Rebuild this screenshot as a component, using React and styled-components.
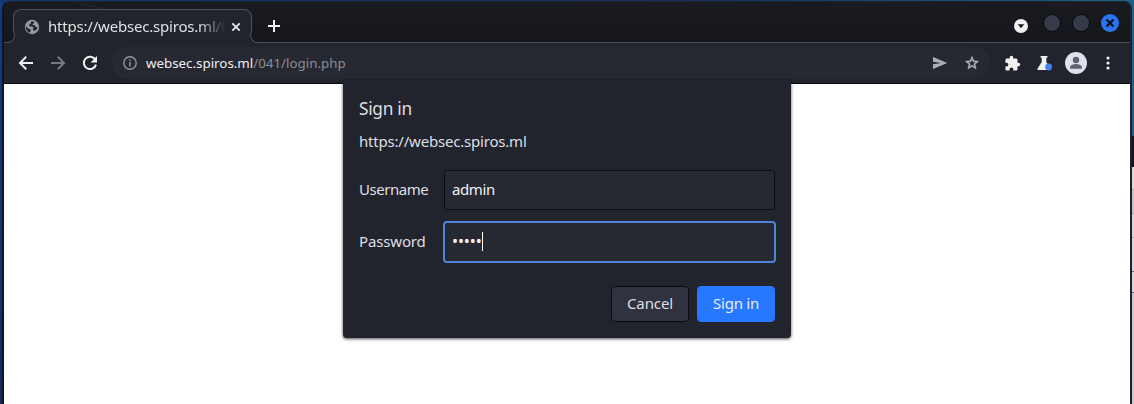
import React from "react";
import styled, { createGlobalStyle } from "styled-components";

const Global = createGlobalStyle`
  * { box-sizing: border-box; }
  body { margin: 0; overflow: hidden; background: #17325f; font-family: "Noto Sans", sans-serif; }
`;

const Desktop = styled.div`
  display: flex;
  width: 1134px;
  height: 404px;
  overflow: hidden;
  background: linear-gradient(90deg, #12366f 0, #122f5c 60%, #1b6287 100%);
`;

const LeftEdge = styled.div`
  width: 2px;
  background: linear-gradient(#0f3c7c, #14387a 40%, #122c5c);
`;

const RightEdge = styled.div`
  display: flex;
  flex-direction: column;
  width: 2px;
`;

const Slice = styled.div`
  height: ${(p) => p.$h}px;
  background: ${(p) => p.$color};
`;

const Window = styled.main`
  display: flex;
  flex-direction: column;
  width: 1130px;
  margin-top: 1px;
  border: solid #20222b;
  border-width: 1px 2px 0;
  border-left-color: #10141f;
  border-radius: 8px 8px 0 0;
  background: #22242d;
  position: relative;
`;

const TabStrip = styled.header`
  display: flex;
  flex: none;
  height: 41px;
  padding: 7px 9px 0 9px;
  border-bottom: 1px solid #4d4f54;
  border-radius: 6px 6px 0 0;
  background:
    linear-gradient(14deg, transparent 45%, #25262b 47%, transparent 51%) 40px 0 / 100px 8px no-repeat,
    linear-gradient(#1a1b21, #16171c);
`;

const Tab = styled.div`
  position: relative;
  display: flex;
  align-items: center;
  width: 239px;
  height: 34px;
  padding: 0 10px 0 10px;
  border: 1px solid #4d4f54;
  border-bottom: 0;
  border-radius: 8px 8px 0 0;
  background: #22242d;
  &::before,
  &::after {
    content: "";
    position: absolute;
    bottom: 0;
    width: 9px;
    height: 9px;
    border-bottom: 1px solid #4d4f54;
  }
  &::before {
    left: -9px;
    border-right: 1px solid #4d4f54;
    border-bottom-right-radius: 8px;
    background: #17181d;
    box-shadow: 4px 4px 0 1px #22242d;
    clip-path: inset(0);
  }
  &::after {
    right: -9px;
    border-left: 1px solid #4d4f54;
    border-bottom-left-radius: 8px;
    background: #17181d;
    box-shadow: -4px 4px 0 1px #22242d;
    clip-path: inset(0);
  }
`;

const TabTitle = styled.span`
  flex: none;
  width: 183px;
  margin-left: 8px;
  padding-bottom: 2px;
  color: #dfe0e2;
  font-size: 15px;
  line-height: 22px;
  letter-spacing: -0.2px;
  white-space: nowrap;
  mask-image: linear-gradient(90deg, #000 150px, transparent 178px);
`;

const CloseIcon = styled.svg`
  flex: none;
`;

const NewTab = styled.svg`
  margin: 10px 0 0 15px;
`;

const WindowControls = styled.div`
  display: flex;
  align-items: center;
  height: 28px;
  margin-left: auto;
`;

const TabSearch = styled.svg`
  margin: 6px 15px 0 0;
`;

const Orb = styled.span`
  display: flex;
  align-items: center;
  justify-content: center;
  width: 18px;
  height: 18px;
  margin-right: 11px;
  border: 1px solid #090a0e;
  border-radius: 50%;
  background: #353b48;
`;

const CloseOrb = styled(Orb)`
  margin-right: 2px;
  border: 0;
  background: #2b74f0;
`;

const Toolbar = styled.nav`
  display: flex;
  flex: none;
  align-items: center;
  height: 41px;
  padding: 0 20px 0 14px;
  border-bottom: 1px solid #08090d;
  background: #22242d;
`;

const NavIcons = styled.div`
  display: flex;
  align-items: center;
  gap: 16px;
  margin-right: 14px;
`;

const AddressBar = styled.div`
  display: flex;
  align-items: center;
  width: 878px;
  height: 32px;
  padding: 0 10px 0 11px;
  border-radius: 16px;
  background: #262832;
`;

const Address = styled.span`
  margin-left: 9px;
  color: #8c8e94;
  font-size: 13.33px;
  line-height: 20px;
  white-space: nowrap;
  b { color: #f0f0f1; font-weight: 400; }
`;

const AddressActions = styled.div`
  display: flex;
  align-items: center;
  gap: 16px;
  margin-left: auto;
`;

const ToolbarActions = styled.div`
  display: flex;
  align-items: center;
  margin-left: auto;
`;

const Icon = styled.svg`
  display: block;
  flex: none;
  margin-left: ${(p) => p.$ml || 0}px;
`;

const Page = styled.section`
  flex: 1;
  width: 1126px;
  background: #fff;
`;

const Dialog = styled.form`
  position: absolute;
  top: 78px;
  left: 339px;
  width: 448px;
  height: 258px;
  padding: 17px 16px 16px;
  border-radius: 4px;
  background: #22242d;
  box-shadow: 0 1px 3px 1px rgba(0, 0, 0, 0.28), 0 1px 2px rgba(0, 0, 0, 0.35);
  color: #dedfe2;
  font-size: 15px;
`;

const Title = styled.h1`
  margin: 0;
  font-size: 17.3px;
  font-weight: 400;
  line-height: 24px;
  letter-spacing: -0.3px;
`;

const Origin = styled.p`
  margin: 9px 0 18px;
  line-height: 22px;
  letter-spacing: -0.2px;
`;

const Field = styled.label`
  display: flex;
  align-items: center;
  height: 40px;
  margin-bottom: 12px;
`;

const FieldName = styled.span`
  width: 85px;
  padding-bottom: 2px;
  letter-spacing: ${(p) => p.$tracking}px;
`;

const Input = styled.span`
  display: flex;
  align-items: center;
  width: 331px;
  height: 40px;
  padding: 0 0 2px 7px;
  border: 1px solid #0d0e13;
  border-radius: 3px;
  background: #262832;
  color: #f2f2f3;
  letter-spacing: -0.4px;
  ${(p) => p.$focused && `
    border-color: #4d82d7;
    box-shadow: 0 0 0 1px #5187dd;
    font-size: 16px;
    letter-spacing: -0.1px;
  `}
`;

const Caret = styled.i`
  width: 1px;
  height: 19px;
  background: #fff;
`;

const Buttons = styled.div`
  display: flex;
  justify-content: flex-end;
  gap: 8px;
  margin-top: 24px;
`;

const Button = styled.button`
  width: 78px;
  height: 36px;
  padding: 0 0 2px;
  border: 1px solid ${(p) => (p.$primary ? "#2777ff" : "#0c0d12")};
  border-radius: 4px;
  background: ${(p) => (p.$primary ? "#2777ff" : "#30333f")};
  color: ${(p) => (p.$primary ? "#e5eeff" : "#dedfe2")};
  font: 15px "Noto Sans", sans-serif;
  letter-spacing: ${(p) => (p.$primary ? -0.25 : -0.1)}px;
`;

const slices = [
  [136, "#1b6287"],
  [31, "#12151d"],
  [22, "#d9d9dc"],
  [1, "#a8a8ad"],
  [23, "#c4c4c8"],
  [1, "#a8a8ad"],
  [23, "#d5d5d9"],
  [1, "#a8a8ad"],
  [33, "#d5d5d9"],
  [1, "#62636a"],
  [20, "#d5d5d9"],
  [1, "#62636a"],
  [111, "#c9c9ce"],
];

export default function App() {
  return (
    <Desktop>
      <Global />
      <LeftEdge />
      <Window>
        <TabStrip>
          <Tab>
            <Icon width="16" height="16" viewBox="0 0 16 16">
              <circle cx="8" cy="8" r="7.2" fill="#96989b" />
              <path d="M8.5 2.2C7 2.5 6.4 3.5 6.8 4.7L5 5.8l.3 1.5 3 .1 1.3 1.4-.7 1.6.8 1.4c2-.3 3.4-1.6 4-3.3l-2.3-.7-.8-1.6-2.2-.3 1.1-1.6 1.3-.6Z M1.6 7.2l3 2.5 1.8.5.2 1.5-.8 2C3.4 12.8 1.7 10.7 1.6 7.2Z" fill="#22242d" />
            </Icon>
            <TabTitle>https://websec.spiros.ml/0</TabTitle>
            <CloseIcon width="10" height="10" viewBox="0 0 10 10">
              <path d="M1.3 1.3l7.4 7.4M8.7 1.3L1.3 8.7" stroke="#e8e8e9" strokeWidth="1.8" />
            </CloseIcon>
          </Tab>
          <NewTab width="14" height="14" viewBox="0 0 14 14">
            <path d="M7 1v12M1 7h12" stroke="#f2f2f2" strokeWidth="2" />
          </NewTab>
          <WindowControls>
            <TabSearch width="14" height="14" viewBox="0 0 14 14">
              <circle cx="7" cy="7" r="7" fill="#f0f0ef" />
              <path d="M3.8 5.2h6.4L7 9.3Z" fill="#17181d" />
            </TabSearch>
            <Orb />
            <Orb />
            <CloseOrb>
              <svg width="10" height="10" viewBox="0 0 10 10">
                <path d="M1.5 1.5l7 7M8.5 1.5l-7 7" stroke="#0b1122" strokeWidth="2.3" />
              </svg>
            </CloseOrb>
          </WindowControls>
        </TabStrip>
        <Toolbar>
          <NavIcons>
            <Icon width="16" height="16" viewBox="0 0 16 16">
              <path d="M15 8H2.5M8.2 1.8L2 8l6.2 6.2" fill="none" stroke="#f1f1f2" strokeWidth="2" />
            </Icon>
            <Icon width="16" height="16" viewBox="0 0 16 16">
              <path d="M1 8h12.5M7.8 1.8L14 8l-6.2 6.2" fill="none" stroke="#777980" strokeWidth="2" />
            </Icon>
            <Icon width="16" height="16" viewBox="0 0 16 16">
              <path d="M13.3 4.6A6.2 6.2 0 1 0 14 9.6" fill="none" stroke="#f1f1f2" strokeWidth="2" />
              <path d="M15 1v6.5H8.6Z" fill="#f1f1f2" />
            </Icon>
          </NavIcons>
          <AddressBar>
            <Icon width="14" height="14" viewBox="0 0 14 14">
              <circle cx="7" cy="7" r="6.2" fill="none" stroke="#94969b" strokeWidth="1.4" />
              <path d="M7 6v4.4M7 3.4v1.5" stroke="#94969b" strokeWidth="1.5" />
            </Icon>
            <Address><b>websec.spiros.ml</b>/041/login.php</Address>
            <AddressActions>
              <Icon width="16" height="16" viewBox="0 0 16 16">
                <path d="M1 2l14.3 6L1 14V9.3L9 8 1 6.7Z" fill="#aeb0b2" />
              </Icon>
              <Icon width="16" height="16" viewBox="0 0 24 24">
                <path d="M22 9.24l-7.19-.62L12 2 9.19 8.63 2 9.24l5.46 4.73L5.82 21 12 17.27 18.18 21l-1.63-7.03L22 9.24zM12 15.4l-3.76 2.27 1-4.28-3.32-2.88 4.38-.38L12 6.1l1.71 4.04 4.38.38-3.32 2.88 1 4.28L12 15.4z" fill="#b7b8ba" stroke="#b7b8ba" strokeWidth=".7" />
              </Icon>
            </AddressActions>
          </AddressBar>
          <ToolbarActions>
            <Icon width="17" height="17" viewBox="0 0 24 24">
              <path d="M20.5 11H19V7c0-1.1-.9-2-2-2h-4V3.5a2.5 2.5 0 0 0-5 0V5H4c-1.1 0-2 .9-2 2v3.8h1.5a2.7 2.7 0 0 1 0 5.4H2V20c0 1.1.9 2 2 2h3.8v-1.5a2.7 2.7 0 0 1 5.4 0V22H17c1.1 0 2-.9 2-2v-4h1.5a2.5 2.5 0 0 0 0-5z" fill="#f1f1f0" />
            </Icon>
            <Icon $ml={16} width="16" height="16" viewBox="0 0 16 16">
              <path d="M3.6 1h6.8v1.8H9.3V7l4.4 6.5c.5.8 0 1.5-.8 1.5H1.4c-.8 0-1.3-.7-.8-1.5L4.7 7V2.8H3.6Z" fill="#f1f1f0" />
              <circle cx="11.6" cy="12" r="3.4" fill="#4581e8" />
            </Icon>
            <Icon $ml={12} width="22" height="22" viewBox="0 0 22 22">
              <circle cx="11" cy="11" r="11" fill="#dee1e9" />
              <circle cx="11" cy="8" r="3.2" fill="#5d6370" />
              <path d="M5 16.8v-1.5c0-2.3 3.8-3.3 6-3.3s6 1 6 3.3v1.5Z" fill="#5d6370" />
            </Icon>
            <Icon $ml={19} width="4" height="14" viewBox="0 0 4 14">
              <circle cx="2" cy="2" r="1.6" fill="#f1f1f1" />
              <circle cx="2" cy="7" r="1.6" fill="#f1f1f1" />
              <circle cx="2" cy="12" r="1.6" fill="#f1f1f1" />
            </Icon>
          </ToolbarActions>
        </Toolbar>
        <Page />
        <Dialog>
          <Title>Sign in</Title>
          <Origin>https://websec.spiros.ml</Origin>
          <Field>
            <FieldName $tracking={-0.45}>Username</FieldName>
            <Input>admin</Input>
          </Field>
          <Field>
            <FieldName $tracking={-0.15}>Password</FieldName>
            <Input $focused>•••••<Caret /></Input>
          </Field>
          <Buttons>
            <Button type="button">Cancel</Button>
            <Button type="button" $primary>Sign in</Button>
          </Buttons>
        </Dialog>
      </Window>
      <RightEdge>
        {slices.map(([h, color], i) => <Slice key={i} $h={h} $color={color} />)}
      </RightEdge>
    </Desktop>
  );
}
